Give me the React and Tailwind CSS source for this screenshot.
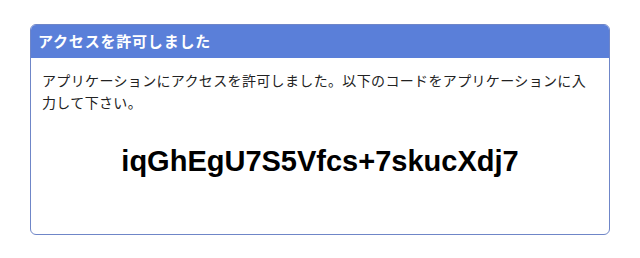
import React from 'react';

const App = () => {
  return (
    <div className="w-[640px] h-[258px] bg-white pt-6 px-[30px]" style={{ fontFamily: '"Noto Sans CJK JP", "Noto Sans", sans-serif' }}>
      <div className="border border-[#6f86c8] rounded-[6px] overflow-hidden h-[211px]">
        {/* header */}
        <div className="h-[33px] bg-[#5a7fd9] px-[7px] flex items-center text-white font-bold text-[15px] tracking-[0.8px]">
          アクセスを許可しました
        </div>
        {/* body */}
        <div className="px-[11px] pt-[11px]">
          <p className="text-[14px] leading-[22px] tracking-[0.35px] text-[#222]">
            アプリケーションにアクセスを許可しました。以下のコードをアプリケーションに入力して下さい。
          </p>
          <p
            className="mt-[32px] text-center text-[29px] leading-[32px] font-bold text-black"
            style={{ fontFamily: '"Liberation Sans", Arial, sans-serif' }}
          >
            iqGhEgU7S5Vfcs+7skucXdj7
          </p>
        </div>
      </div>
    </div>
  );
};

export default App;
